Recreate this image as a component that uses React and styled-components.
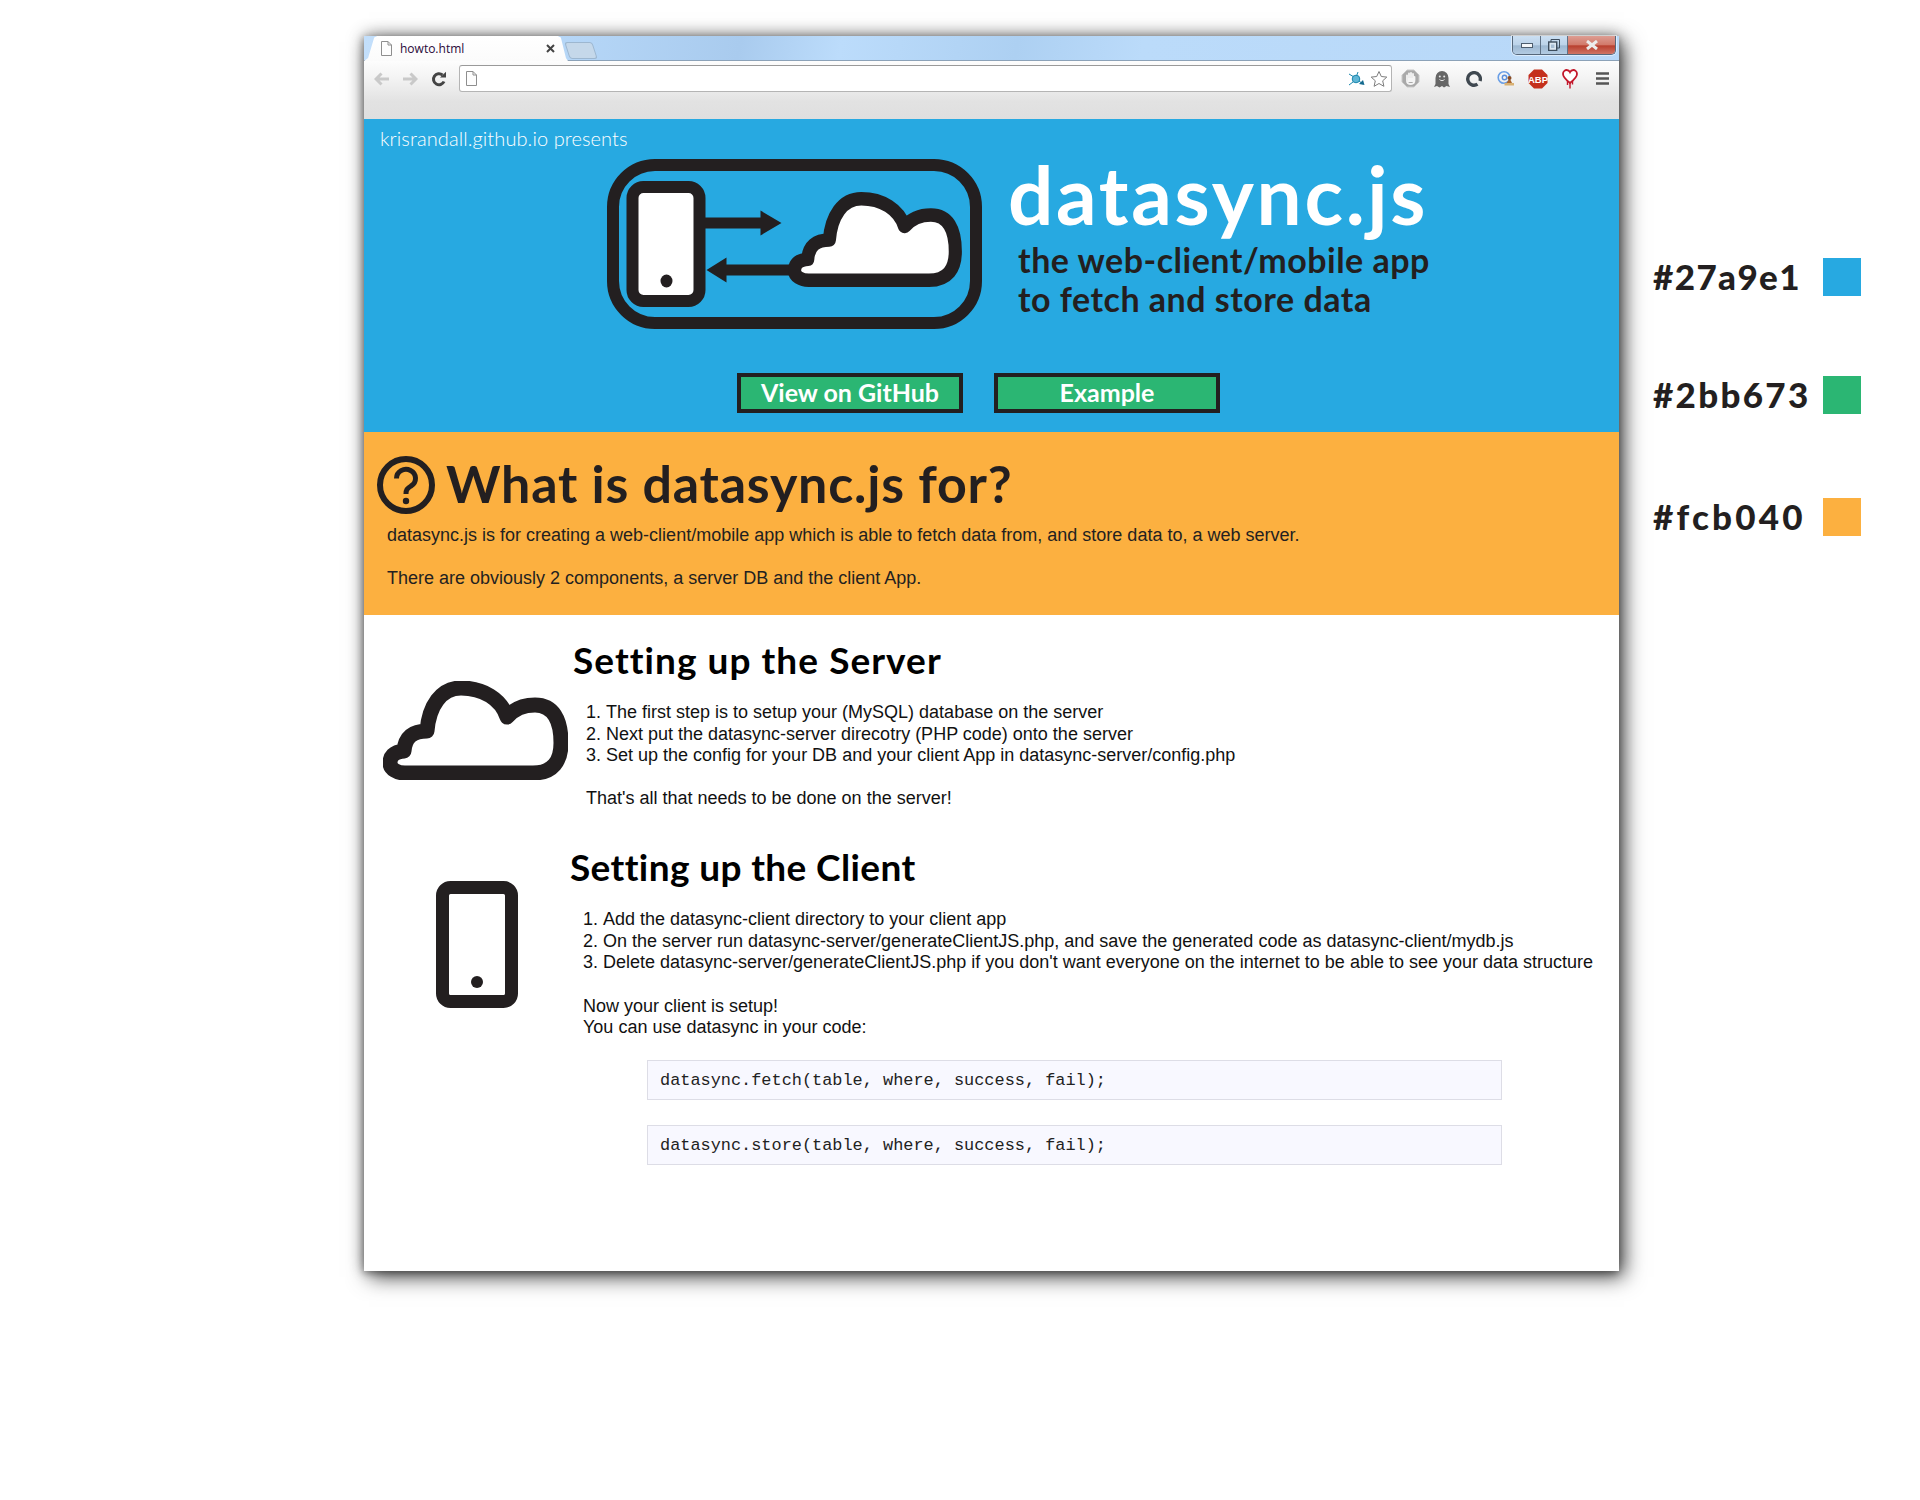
import React from 'react';
import styled, { createGlobalStyle } from 'styled-components';

const ink = '#231f20';
const heading = 'Lato, "Open Sans", sans-serif';

const Global = createGlobalStyle`
  html, body { margin: 0; padding: 0; background: #fff; }
  body { font-family: "Liberation Sans", Arial, sans-serif; }
`;

const Page = styled.div`
  display: flex;
  align-items: flex-start;
  min-height: 1500px;
  box-sizing: border-box;
  padding: 36px 0 0 364px;
`;

const Browser = styled.div`
  display: flex;
  flex-direction: column;
  width: 1255px;
  height: 1235px;
  flex: none;
  background: #fff;
  box-shadow: 5px 6px 20px rgba(0, 0, 0, 0.7), 0 -2px 14px rgba(0, 0, 0, 0.28), -1px 2px 7px rgba(0, 0, 0, 0.3);
`;

/* chrome */
const TabStrip = styled.div`
  display: flex;
  align-items: flex-start;
  height: 24px;
  flex: none;
  background: linear-gradient(100deg, #c3dffb 0%, #b4d5f6 18%, #a9cbee 30%, #bcdcfb 38%, #add0f2 52%, #bbdbfa 62%, #b8d8f8 100%);
  border-bottom: 1px solid #8ca2b8;
  box-sizing: content-box;
`;

const Tab = styled.div`
  display: flex;
  align-items: center;
  width: 204px;
  height: 25px;
  flex: none;
  box-sizing: border-box;
  padding: 0 13px 0 17px;
  background: linear-gradient(#fff, #fbfbfb);
  clip-path: polygon(0 100%, 2% 88%, 5% 6%, 6.5% 0, 95% 0, 96.5% 6%, 99% 88%, 100% 100%);
  position: relative;
  z-index: 1;
`;

const TabTitle = styled.span`
  flex: 1;
  margin-left: 8px;
  font: 12px "Open Sans", sans-serif;
  color: #2a0a3a;
`;

const NewTab = styled.div`
  width: 26px;
  height: 15px;
  margin: 6px 0 0 -1px;
  flex: none;
  background: #c5d8ea;
  border: 1px solid #9db7d0;
  border-radius: 3px;
  transform: skewX(18deg);
`;

const Controls = styled.div`
  display: flex;
  margin-left: auto;
  margin-right: 3px;
  height: 18px;
  border: 1px solid #56677a;
  border-top: none;
  border-radius: 0 0 5px 5px;
  overflow: hidden;
  box-shadow: 0 0 0 1px rgba(255, 255, 255, 0.5);
`;

const ControlButton = styled.div`
  display: flex;
  align-items: center;
  justify-content: center;
  width: ${p => p.$w}px;
  background: ${p => p.$close
    ? 'linear-gradient(#dd9d93, #d27a6b 48%, #b9402f 55%, #cf7464)'
    : 'linear-gradient(#cbdff2, #bcd3e9 48%, #9db8d2 55%, #b3cbe2)'};
  border-left: ${p => p.$first ? 'none' : '1px solid #5f7185'};
`;

const Toolbar = styled.div`
  display: flex;
  align-items: flex-start;
  height: 58px;
  flex: none;
  box-sizing: border-box;
  padding: 4px 0 0 3px;
  background: linear-gradient(#fdfdfd 0%, #f3f3f3 30%, #e2e2e2 70%, #dfdfdf 100%);
`;

const NavIcon = styled.div`
  display: flex;
  align-items: center;
  justify-content: center;
  height: 27px;
  width: ${p => p.$w || 29}px;
  flex: none;
`;

const Address = styled.div`
  display: flex;
  align-items: center;
  justify-content: space-between;
  flex: none;
  width: 933px;
  height: 27px;
  margin-left: 6px;
  box-sizing: border-box;
  padding: 0 3px 0 6px;
  background: #fff;
  border: 1px solid #b4b4b4;
  border-top-color: #9a9a9a;
  border-radius: 3px;
`;

const AddressEnd = styled.div`
  display: flex;
  align-items: center;
  gap: 5px;
`;

const Extensions = styled.div`
  display: flex;
  align-items: center;
  height: 27px;
  margin-left: 2px;
`;

const Ext = styled.div`
  display: flex;
  align-items: center;
  justify-content: center;
  width: 32px;
  height: 27px;
`;

/* hero */
const Hero = styled.header`
  height: 313px;
  flex: none;
  background: #27a9e1;
  box-sizing: border-box;
  padding-top: 8px;
`;

const Presents = styled.div`
  height: 24px;
  padding-left: 16px;
  font: 300 20px/22px ${heading};
  letter-spacing: 0.1px;
  color: #fff;
`;

const HeroMain = styled.div`
  display: flex;
  align-items: flex-start;
  margin: 8px 0 0 243px;
`;

const TitleBlock = styled.div`
  margin-left: 26px;
`;

const Title = styled.h1`
  margin: 0;
  font: 700 80px/70px ${heading};
  letter-spacing: 2.7px;
  color: #fff;
`;

const Subtitle = styled.p`
  margin: 11px 0 0 10px;
  font: 700 34px/39px ${heading};
  letter-spacing: 0.5px;
  color: ${ink};
`;

const ButtonRow = styled.div`
  display: flex;
  gap: 31px;
  margin: 44px 0 0 373px;
`;

const Button = styled.a`
  display: flex;
  align-items: center;
  justify-content: center;
  width: 226px;
  height: 40px;
  box-sizing: border-box;
  padding-bottom: 2px;
  background: #2bb673;
  border: 4px solid ${ink};
  font: 700 25px ${heading};
  color: #fff;
  text-decoration: none;
`;

/* what is it for */
const Intro = styled.section`
  height: 183px;
  flex: none;
  box-sizing: border-box;
  padding-top: 24px;
  background: #fcb040;
`;

const IntroHead = styled.div`
  display: flex;
  align-items: flex-start;
  gap: 10px;
  padding-left: 12px;
`;

const IntroTitle = styled.h2`
  margin: 0;
  font: 700 52px/54px ${heading};
  letter-spacing: 0.77px;
  color: ${ink};
`;

const IntroText = styled.div`
  margin: 10.5px 0 0 23px;
  font-size: 18px;
  line-height: 21.6px;
  color: ${ink};
`;

const Para = styled.p`
  margin: 0 0 21.6px;
  &:last-child { margin-bottom: 0; }
`;

/* how-to sections */
const Main = styled.main`
  flex: 1;
  padding-top: 24px;
`;

const HowTo = styled.section`
  display: flex;
  align-items: flex-start;
  gap: ${p => p.$gap}px;
  padding-left: ${p => p.$left}px;
  margin-bottom: 36px;
`;

const IconCol = styled.div`
  flex: none;
  padding-top: ${p => p.$top}px;
  line-height: 0;
`;

const Body = styled.div`
  flex: 1;
  font-size: 18px;
  line-height: 21.6px;
  color: #111;
`;

const HowToTitle = styled.h2`
  margin: 0 0 21.1px;
  font: 700 37px/42px ${heading};
  letter-spacing: ${p => p.$track}px;
  color: #000;
`;

const Steps = styled.ol`
  margin: 0 0 21.6px;
  padding-left: ${p => p.$indent}px;
`;

const Note = styled.p`
  margin: 0 0 0 ${p => p.$indent}px;
`;

const Code = styled.pre`
  width: 855px;
  height: 40px;
  box-sizing: border-box;
  margin: ${p => p.$top}px 0 0 77px;
  padding: 0 12px;
  background: #f8f8ff;
  border: 1px solid #dddde6;
  font: 16.9px/39px "Liberation Mono", "Courier New", monospace;
  color: #222;
`;

/* colour legend */
const Legend = styled.aside`
  display: flex;
  flex-direction: column;
  width: 208px;
  margin-left: 34px;
  padding-top: 222px;
  flex: none;
`;

const LegendRow = styled.div`
  display: flex;
  align-items: center;
  justify-content: space-between;
  height: 38px;
  margin-bottom: ${p => p.$after}px;
`;

const Hex = styled.span`
  padding-bottom: 3px;
  font: 900 35px/38px ${heading};
  letter-spacing: ${p => p.$track}px;
  color: ${ink};
`;

const Swatch = styled.span`
  display: block;
  width: 38px;
  height: 38px;
  background: ${p => p.$color};
`;

const CLOUD = 'M22 92H150C170 92 178 80 178 62C178 38 170 24 152 24C140 24 131 28 124 36C118 18 100 7 78 7C58 7 46 25 44 50C30 50 22 56 21 70C10 71 7 76 7 82C7 88 14 92 22 92Z';

const DocIcon = () => (
  <svg width="11" height="15" viewBox="0 0 11 15">
    <path d="M.5.5H7L10.500 4V14.500H.5Z" fill="#fdfdfd" stroke="#8e8e8e" />
    <path d="M7 .5V4H10.500" fill="none" stroke="#8e8e8e" />
  </svg>
);

const ArrowIcon = ({ flip }) => (
  <svg width="16" height="14" viewBox="0 0 16 14" style={flip ? { transform: 'scaleX(-1)' } : undefined}>
    <path d="M7.500 1.500L2 7L7.500 12.500M2.500 7H15" fill="none" stroke="#c9c9c9" strokeWidth="3" />
  </svg>
);

const ReloadIcon = () => (
  <svg width="16" height="16" viewBox="0 0 16 16">
    <path d="M13 10.500A5.500 5.500 0 1 1 11.500 4" fill="none" stroke="#444" strokeWidth="3" />
    <path d="M9 6.500L15 .8V6.500Z" fill="#444" />
  </svg>
);

const CubeIcon = () => (
  <svg width="18" height="17" viewBox="0 0 18 17">
    <g stroke="#1a86ad" strokeWidth="1" fill="none">
      <path d="M2 4L7 7M11 2L9.500 6M12 11L16 14M6 12L2 15" />
    </g>
    <circle cx="9" cy="9" r="3.800" fill="#5fb6d6" stroke="#1a86ad" />
    <path d="M12 14L16 10L17.500 15Z" fill="#14698e" />
  </svg>
);

const StarIcon = () => (
  <svg width="18" height="18" viewBox="0 0 18 18">
    <path d="M9 1.500L11.300 6.500L16.800 7.100L12.700 10.800L13.900 16.300L9 13.500L4.100 16.300L5.300 10.800L1.200 7.100L6.700 6.500Z" fill="#fff" stroke="#7d7d7d" />
  </svg>
);

const HandIcon = () => (
  <svg width="19" height="19" viewBox="0 0 19 19">
    <path d="M6 1H13L18 6V13L13 18H6L1 13V6Z" fill="#a9a9a9" stroke="#c9c9c9" />
    <path d="M6 10V6.500M8 10V4.500M10 10V4M12 10V5M6 9V12C6 14 8 15 10 15C12 15 13.500 14 13.500 11V8" fill="none" stroke="#f4f4f4" strokeWidth="1.800" strokeLinecap="round" />
    <path d="M7 9H13V13H7Z" fill="#f4f4f4" />
  </svg>
);

const GhostIcon = () => (
  <svg width="16" height="18" viewBox="0 0 16 18">
    <path d="M1.500 8A6.500 7 0 0 1 14.500 8V14L16 17L12.500 16L10 17.500L8 16L5.500 17.500L3 16L0 17L1.500 14Z" fill="#666" />
    <circle cx="5.800" cy="6.500" r="1" fill="#e8e8e8" />
    <circle cx="10.200" cy="6.500" r="1" fill="#e8e8e8" />
    <path d="M5.500 9.500C7 11 9 11 10.500 9.500" fill="none" stroke="#e8e8e8" />
  </svg>
);

const RingIcon = () => (
  <svg width="16" height="16" viewBox="0 0 16 16">
    <path d="M11.500 13.200A6.300 6.300 0 1 1 14 10" fill="none" stroke="#3f4850" strokeWidth="3.400" />
  </svg>
);

const MailStampIcon = () => (
  <svg width="18" height="18" viewBox="0 0 18 18">
    <circle cx="7" cy="7.500" r="5.800" fill="none" stroke="#6a9fe6" strokeWidth="1.600" />
    <circle cx="7.500" cy="7.500" r="2.200" fill="none" stroke="#5b8fdc" strokeWidth="1.400" />
    <circle cx="12.500" cy="8" r="2" fill="#8a4b22" />
    <path d="M11.500 10H13.500L15 13H9.500Z" fill="#a8642c" />
    <path d="M7.500 13H17V15.500H7.500Z" fill="#d9b173" />
  </svg>
);

const AbpIcon = () => (
  <svg width="20" height="20" viewBox="0 0 20 20">
    <path d="M6 .5H14L19.500 6V14L14 19.500H6L.5 14V6Z" fill="#c4301c" />
    <text x="10" y="13.500" textAnchor="middle" fontFamily="Liberation Sans, sans-serif" fontWeight="700" fontSize="9.500" fill="#fff">ABP</text>
  </svg>
);

const HeartIcon = () => (
  <svg width="16" height="20" viewBox="0 0 16 20">
    <path d="M8 14C3 10 1 8 1 5C1 2.500 3 1 4.700 1C6.200 1 7.400 2 8 3.200C8.600 2 9.800 1 11.300 1C13 1 15 2.500 15 5C15 8 13 10 8 14Z" fill="#fff" stroke="#c3162a" strokeWidth="1.800" />
    <path d="M5.500 12V16M8 14V19.500M10.500 12V15.500" stroke="#c3162a" strokeWidth="1.400" />
  </svg>
);

const MenuIcon = () => (
  <svg width="13" height="13" viewBox="0 0 13 13">
    <path d="M0 1.500H13M0 6.500H13M0 11.500H13" stroke="#555" strokeWidth="2.400" />
  </svg>
);

const CloudIcon = () => (
  <svg width="185" height="99" viewBox="0 0 185 99">
    <path d={CLOUD} fill="#fff" stroke={ink} strokeWidth="15" strokeLinejoin="round" />
  </svg>
);

const PhoneIcon = () => (
  <svg width="82" height="127" viewBox="0 0 82 127">
    <rect x="6.500" y="6.500" width="69" height="114" rx="8" fill="#fff" stroke={ink} strokeWidth="13" />
    <circle cx="41" cy="101" r="6" fill={ink} />
  </svg>
);

const HelpIcon = () => (
  <svg width="60" height="58" viewBox="0 0 60 58">
    <circle cx="30" cy="29" r="26" fill="none" stroke={ink} strokeWidth="6" />
    <path d="M20.500 22.500A9.500 9 0 1 1 35 30C31 32.500 30 34 30 38" fill="none" stroke={ink} strokeWidth="5" />
    <circle cx="30" cy="45" r="3.200" fill={ink} />
  </svg>
);

const Logo = () => (
  <svg width="375" height="170" viewBox="0 0 375 170" style={{ flex: 'none' }}>
    <rect x="6" y="6" width="363" height="158" rx="42" fill="none" stroke={ink} strokeWidth="12" />
    <rect x="25.500" y="28" width="67" height="114" rx="11" fill="#fff" stroke={ink} strokeWidth="12" />
    <ellipse cx="59.500" cy="122" rx="6" ry="6.500" fill={ink} />
    <path d="M98 58.500H153.500V51.500L174.500 64L153.500 76.500V69.500H98Z" fill={ink} />
    <path d="M99.500 111L119.500 98.500V105.500H185V116.500H119.500V123.500Z" fill={ink} />
    <path d={CLOUD} transform="translate(181 33) scale(0.94 0.96)" fill="#fff" stroke={ink} strokeWidth="14" strokeLinejoin="round" />
  </svg>
);

const App = () => (
  <Page>
    <Global />
    <Browser>
      <TabStrip>
        <Tab>
          <DocIcon />
          <TabTitle>howto.html</TabTitle>
          <svg width="9" height="9" viewBox="0 0 9 9">
            <path d="M1 1L8 8M8 1L1 8" stroke="#444" strokeWidth="2" />
          </svg>
        </Tab>
        <NewTab />
        <Controls>
          <ControlButton $w={27} $first>
            <svg width="12" height="5" viewBox="0 0 12 5">
              <rect x=".5" y=".5" width="11" height="4" fill="#f4f7fa" stroke="#4d5d6d" />
            </svg>
          </ControlButton>
          <ControlButton $w={26}>
            <svg width="12" height="12" viewBox="0 0 12 12">
              <path d="M3 3V.5H11.500V9H9" fill="none" stroke="#3d4d5d" />
              <rect x=".7" y="3" width="8" height="8.500" fill="#dbe7f2" stroke="#3d4d5d" strokeWidth="1.400" />
              <rect x="3" y="5.500" width="3.400" height="3.500" fill="#a8bfd5" />
            </svg>
          </ControlButton>
          <ControlButton $w={47} $close>
            <svg width="14" height="10" viewBox="0 0 14 10">
              <path d="M2 1L12 9M12 1L2 9" stroke="#ececec" strokeWidth="3" />
            </svg>
          </ControlButton>
        </Controls>
      </TabStrip>
      <Toolbar>
        <NavIcon $w={29}><ArrowIcon /></NavIcon>
        <NavIcon $w={28}><ArrowIcon flip /></NavIcon>
        <NavIcon $w={29}><ReloadIcon /></NavIcon>
        <Address>
          <DocIcon />
          <AddressEnd>
            <CubeIcon />
            <StarIcon />
          </AddressEnd>
        </Address>
        <Extensions>
          <Ext><HandIcon /></Ext>
          <Ext><GhostIcon /></Ext>
          <Ext><RingIcon /></Ext>
          <Ext><MailStampIcon /></Ext>
          <Ext><AbpIcon /></Ext>
          <Ext><HeartIcon /></Ext>
          <Ext><MenuIcon /></Ext>
        </Extensions>
      </Toolbar>

      <Hero>
        <Presents>krisrandall.github.io presents</Presents>
        <HeroMain>
          <Logo />
          <TitleBlock>
            <Title>datasync.js</Title>
            <Subtitle>the web-client/mobile app<br />to fetch and store data</Subtitle>
          </TitleBlock>
        </HeroMain>
        <ButtonRow>
          <Button>View on GitHub</Button>
          <Button>Example</Button>
        </ButtonRow>
      </Hero>

      <Intro>
        <IntroHead>
          <HelpIcon />
          <IntroTitle>What is datasync.js for?</IntroTitle>
        </IntroHead>
        <IntroText>
          <Para>datasync.js is for creating a web-client/mobile app which is able to fetch data from, and store data to, a web server.</Para>
          <Para>There are obviously 2 components, a server DB and the client App.</Para>
        </IntroText>
      </Intro>

      <Main>
        <HowTo $left={19} $gap={5}>
          <IconCol $top={42}><CloudIcon /></IconCol>
          <Body>
            <HowToTitle $track={1.05}>Setting up the Server</HowToTitle>
            <Steps $indent={33}>
              <li>The first step is to setup your (MySQL) database on the server</li>
              <li>Next put the datasync-server direcotry (PHP code) onto the server</li>
              <li>Set up the config for your DB and your client App in datasync-server/config.php</li>
            </Steps>
            <Note $indent={13}>That's all that needs to be done on the server!</Note>
          </Body>
        </HowTo>
        <HowTo $left={72} $gap={52}>
          <IconCol $top={35}><PhoneIcon /></IconCol>
          <Body>
            <HowToTitle $track={0.38}>Setting up the Client</HowToTitle>
            <Steps $indent={33}>
              <li>Add the datasync-client directory to your client app</li>
              <li>On the server run datasync-server/generateClientJS.php, and save the generated code as datasync-client/mydb.js</li>
              <li>Delete datasync-server/generateClientJS.php if you don't want everyone on the internet to be able to see your data structure</li>
            </Steps>
            <Note $indent={13}>Now your client is setup!<br />You can use datasync in your code:</Note>
            <Code $top={21}>datasync.fetch(table, where, success, fail);</Code>
            <Code $top={25}>datasync.store(table, where, success, fail);</Code>
          </Body>
        </HowTo>
      </Main>
    </Browser>

    <Legend>
      <LegendRow $after={80}><Hex $track={1.4}>#27a9e1</Hex><Swatch $color="#27a9e1" /></LegendRow>
      <LegendRow $after={84}><Hex $track={2.3}>#2bb673</Hex><Swatch $color="#2bb673" /></LegendRow>
      <LegendRow $after={0}><Hex $track={3.2}>#fcb040</Hex><Swatch $color="#fcb040" /></LegendRow>
    </Legend>
  </Page>
);

export default App;
